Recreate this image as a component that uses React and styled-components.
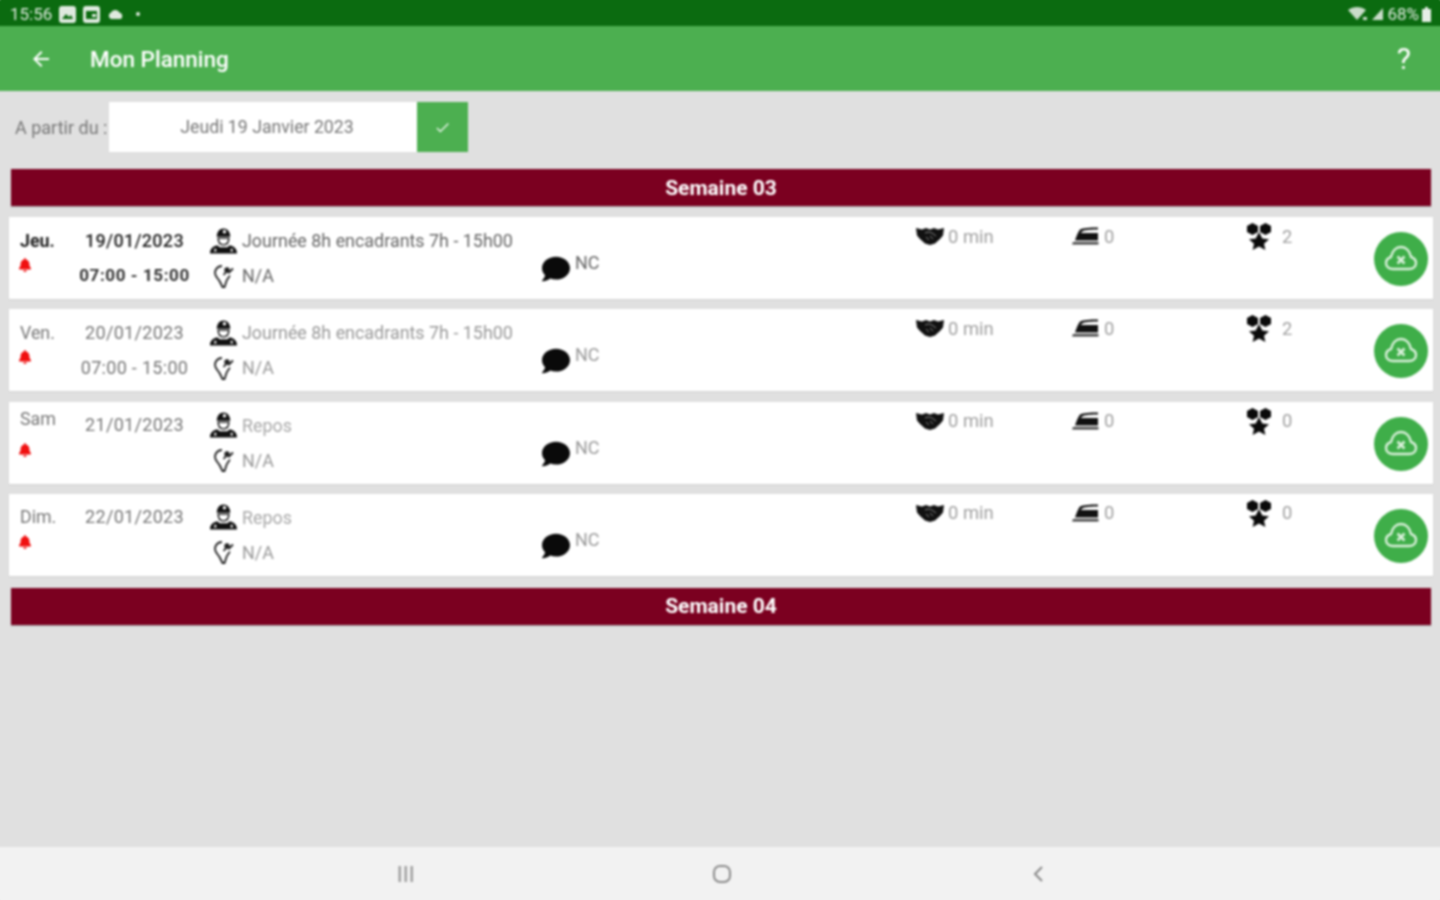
import styled, { createGlobalStyle } from "styled-components";
import { FaBell, FaComment } from "react-icons/fa";
import { MdArrowBack, MdCheck } from "react-icons/md";

const GlobalStyle = createGlobalStyle`
  html, body {
    margin: 0;
    padding: 0;
    overflow: hidden;
    background: #e0e0e0;
    font-family: Roboto, "Liberation Sans", sans-serif;
  }
`;

const Page = styled.div`
  width: 1440px;
  height: 900px;
  display: flex;
  flex-direction: column;
  filter: blur(0.8px);
`;

// the box-shadows bleed the bar colour past the window edge so the blur stays clean there
const StatusBar = styled.div`
  height: 26px;
  background: #0b6b10;
  box-shadow: -4px 0 0 #0b6b10, 4px 0 0 #0b6b10, 0 -4px 0 #0b6b10;
  display: flex;
  align-items: center;
  justify-content: space-between;
  padding: 2px 9px 0 10px;
  box-sizing: border-box;
  color: #dfeadf;
  font-size: 17px;
`;

const StatusGroup = styled.div`
  display: flex;
  align-items: center;
  gap: ${(p) => p.$gap || 7}px;
`;

const AppBar = styled.header`
  height: 65px;
  background: #4caf50;
  box-shadow: -4px 0 0 #4caf50, 4px 0 0 #4caf50;
  display: flex;
  align-items: center;
  color: #fff;
  padding: 0 29px;
  box-sizing: border-box;
`;

const Title = styled.h1`
  margin: 0 0 0 37px;
  flex: 1;
  font-size: 22.5px;
  font-weight: 500;
`;

const Help = styled.span`
  font-size: 30px;
  font-weight: 400;
`;

const Main = styled.main`
  flex: 1;
  padding: 11px 9px 0;
  display: flex;
  flex-direction: column;
`;

const DateRow = styled.div`
  display: flex;
  align-items: stretch;
  height: 50px;
  margin-bottom: 17px;
`;

const DateLabel = styled.label`
  width: 100px;
  box-sizing: border-box;
  padding-left: 6px;
  align-self: center;
  color: #777;
  font-size: 18px;
  white-space: nowrap;
`;

const DateValue = styled.div`
  width: 308px;
  background: #fff;
  display: flex;
  align-items: center;
  justify-content: center;
  color: #777;
  font-size: 17.7px;
  padding-left: 8px;
  box-sizing: border-box;
`;

const DateButton = styled.button`
  width: 51px;
  border: none;
  padding: 0;
  background: #4caf50;
  color: #e8f5e9;
  display: flex;
  align-items: center;
  justify-content: center;
`;

const WeekBanner = styled.div`
  height: 37px;
  margin: 0 1px 0 2px;
  width: 1420px;
  background: #7b0020;
  color: #fff;
  font-size: 21px;
  font-weight: 700;
  display: flex;
  align-items: center;
  justify-content: center;
  box-shadow: 0 1px 1px rgba(0, 0, 0, 0.25);
`;

const DayList = styled.div`
  display: flex;
  flex-direction: column;
  gap: 10.33px;
  margin: 11px 0 12px;
`;

const DayCard = styled.article`
  height: 82px;
  width: 1424px;
  box-sizing: border-box;
  background: #fff;
  padding-left: 11px;
  display: grid;
  grid-template-columns: 55px 120px 15px 332px 374px 156px 174px 128px 1fr;
  color: ${(p) => (p.$today ? "#666" : "#999")};
  box-shadow: 0 1px 1px rgba(0, 0, 0, 0.05);
`;

const DayColumn = styled.div`
  grid-column: 1;
  padding-top: 6px;
  display: flex;
  flex-direction: column;
`;

const DayName = styled.div`
  height: ${(p) => p.$height}px;
  margin-bottom: ${(p) => 35 - p.$height}px;
  line-height: ${(p) => p.$height}px;
  font-size: 17.8px;
  font-weight: ${(p) => (p.$today ? 700 : 400)};
  color: ${(p) => (p.$today ? "#222" : "#777")};
`;

const Bell = styled.span`
  height: 14px;
  color: #f01010;
  font-size: 14px;
  display: flex;
  align-items: center;
  margin-left: -2px;
`;

const TimeColumn = styled.div`
  grid-column: 2;
  padding-top: ${(p) => (p.$short ? 5 : 6)}px;
  display: flex;
  flex-direction: column;
  align-items: center;
  margin-left: -1px;
`;

const DateText = styled.div`
  height: 35px;
  line-height: 35px;
  font-size: 18px;
  font-weight: ${(p) => (p.$today ? 500 : 400)};
  color: ${(p) => (p.$today ? "#222" : "#777")};
  letter-spacing: 0.3px;
`;

const Hours = styled(DateText)`
  font-size: ${(p) => (p.$today ? 17 : 18)}px;
  font-weight: ${(p) => (p.$today ? 700 : 400)};
  color: ${(p) => (p.$today ? "#333" : "#777")};
  letter-spacing: ${(p) => (p.$today ? 0.6 : 0.3)}px;
`;

const JobColumn = styled.div`
  grid-column: 4;
  padding-top: 6px;
  display: flex;
  flex-direction: column;
`;

const JobLine = styled.div`
  height: 35px;
  display: flex;
  align-items: center;
  gap: 5px;
  font-size: 17.9px;
  color: ${(p) => (p.$muted ? "#a8a8a8" : "inherit")};
  white-space: nowrap;
`;

const JobLabel = styled.span`
  margin-top: ${(p) => (p.$muted ? 1 : 0)}px;
`;

const IconSlot = styled.span`
  width: 27px;
  display: flex;
  justify-content: center;
  color: #111;
`;

const NoteColumn = styled.div`
  grid-column: 5;
  padding-top: 38px;
  display: flex;
  align-items: flex-start;
  gap: 5px;
  font-size: 18px;
`;

const NoteText = styled.span`
  margin-top: -3px;
`;

const Stat = styled.div`
  grid-column: ${(p) => p.$column};
  padding-top: 9px;
  height: 20px;
  display: flex;
  align-items: center;
  gap: ${(p) => p.$gap}px;
  font-size: 18.4px;
  color: #a0a0a0;
`;

const SyncButton = styled.button`
  grid-column: 9;
  width: 54px;
  height: 54px;
  margin-top: 15px;
  border: none;
  border-radius: 50%;
  padding: 0;
  background: #3fae49;
  display: flex;
  align-items: center;
  justify-content: center;
`;

const NavBar = styled.nav`
  height: 53px;
  background: #f2f2f2;
  box-shadow: -4px 0 0 #f2f2f2, 4px 0 0 #f2f2f2, 0 4px 0 #f2f2f2;
  box-sizing: border-box;
  padding: 0 396px;
  display: flex;
  align-items: center;
  justify-content: space-between;
`;

const HomeSlot = styled.span`
  display: flex;
  margin-right: 4px;
`;

const Worker = () => (
  <svg width="28" height="28" viewBox="0 0 28 28" fill="#111">
    <path d="M7 9.5C7 4.5 10 1 14 1s7 3.5 7 8.5z" />
    <circle cx="15" cy="4.5" r="1.8" fill="#fff" />
    <path d="M8.5 11h11c0 4-2 7-5.5 7s-5.5-3-5.500-7z" fill="none" stroke="#111" strokeWidth="1.5" />
    <path d="M0 27c0-5 3-7.5 7.500-8.500l2.500 2h8l2.500-2c4.500 1 7.500 3.500 7.500 8.500z" />
    <rect x="4.5" y="22" width="2" height="3" fill="#fff" />
    <rect x="21.5" y="22" width="2" height="3" fill="#fff" />
  </svg>
);

const Bulb = () => (
  <svg width="22" height="26" viewBox="0 0 22 26" fill="none" stroke="#222" strokeWidth="1.8">
    <path d="M9 3C5 3 2 6 2 10c0 3.500 3 5.500 4.500 8l3 6h2l2-6c.8-2.200 2.500-3.500 3.300-5.500" />
    <path d="M10.5 12l3.500-4 2 1.500 4-4" />
    <circle cx="14" cy="7" r="1.8" fill="#222" />
  </svg>
);

// handshake seen as a dense dark shield with two pointed ears
const Handshake = () => (
  <svg width="28" height="18" viewBox="0 0 28 18" fill="#111">
    <path d="M0 1l6 1.500L10 1l4 1.500L18 1l4 1.500L28 1l-1 7.500-3 3.500-5 4.500-5 1.500-5-1.500L4 12 1 8.500z" />
    <path d="M9 6c3-1.500 5-1 7 0l4 3M10 10l3 3M14 9l3 3" fill="none" stroke="#888" strokeWidth="1" />
  </svg>
);

const Iron = () => (
  <svg width="28" height="20" viewBox="0 0 28 20" fill="#111">
    <path d="M8 3.500c3-1.500 10-2 18-2v2c-6 0-12 .2-15 1.500L8.500 7H26v7.500H3C4.500 10 6 6 8 3.500z" />
    <path d="M1 16h25.500v2.500H0z" fill="#444" />
  </svg>
);

const Team = () => (
  <svg width="26" height="28" viewBox="0 0 26 28" fill="#0a0a0a">
    <path d="M6.5 1L12 4v6l-5.500 3L1 10V4z" />
    <path d="M19.5 1L25 4v6l-5.500 3L14 10V4z" />
    <path d="M13 10l3.300 6.400 6.700.8-5 4.600 1.400 6.200-6.400-3.400-6.400 3.400 1.400-6.200-5-4.600 6.700-.8z" />
  </svg>
);

const CloudOff = () => (
  <svg width="34" height="30" viewBox="0 0 34 30" fill="none" stroke="#d9f0da" strokeWidth="2.4" strokeLinejoin="round">
    <path d="M9 25c-4 0-7-2.500-7-6 0-3 2-5 5-6C8 7 12 3 17 3s9 4 10 10c3 1 5 3 5 6 0 3.500-3 6-7 6z" />
    <path d="M13.5 12.500l7 7M20.500 12.500l-7 7" strokeWidth="2.6" />
  </svg>
);

const Wifi = () => (
  <svg width="20" height="15" viewBox="0 0 20 15" fill="#c9dcc9">
    <path d="M0 3c5-4 13-4 18 0l-9 10z" />
    <rect x="15" y="10" width="4" height="3" />
  </svg>
);

const Signal = () => (
  <svg width="13" height="14" viewBox="0 0 13 14" fill="#c9dcc9">
    <path d="M12 1v12H1z" />
  </svg>
);

const Battery = () => (
  <svg width="9" height="15" viewBox="0 0 9 15" fill="#e6efe6">
    <path d="M3 0h3v2h3v13H0V2h3z" />
  </svg>
);

const SmallGlyph = ({ children }) => (
  <svg width="17" height="17" viewBox="0 0 17 17">
    <rect width="17" height="17" rx="3" fill="#dfeadf" />
    {children}
  </svg>
);

const HomeCircle = () => (
  <svg width="20" height="20" viewBox="0 0 20 20" fill="none" stroke="#8a8a8a" strokeWidth="2">
    <rect x="2" y="2" width="16" height="16" rx="6" />
  </svg>
);

const Recents = () => (
  <svg width="20" height="18" viewBox="0 0 20 18" fill="#a0a0a0">
    <rect x="2.5" y="1" width="2.5" height="16" />
    <rect x="8.5" y="1" width="2.5" height="16" />
    <rect x="14.5" y="1" width="2.5" height="16" />
  </svg>
);

const Chevron = () => (
  <svg width="12" height="20" viewBox="0 0 12 20" fill="none" stroke="#888" strokeWidth="2">
    <path d="M10 3L3 10l7 7" />
  </svg>
);

const days = [
  { name: "Jeu.", date: "19/01/2023", hours: "07:00 - 15:00", job: "Journée 8h encadrants 7h - 15h00", team: 2, today: true, nameHeight: 35 },
  { name: "Ven.", date: "20/01/2023", hours: "07:00 - 15:00", job: "Journée 8h encadrants 7h - 15h00", team: 2, nameHeight: 35 },
  { name: "Sam", date: "21/01/2023", job: "Repos", team: 0, nameHeight: 21 },
  { name: "Dim.", date: "22/01/2023", job: "Repos", team: 0, nameHeight: 33 },
];

function DayRow({ day }) {
  const rest = day.job === "Repos";
  return (
    <DayCard $today={day.today}>
      <DayColumn>
        <DayName $today={day.today} $height={day.nameHeight}>{day.name}</DayName>
        <Bell><FaBell /></Bell>
      </DayColumn>
      <TimeColumn $short={!day.hours}>
        <DateText $today={day.today}>{day.date}</DateText>
        {day.hours && <Hours $today={day.today}>{day.hours}</Hours>}
      </TimeColumn>
      <JobColumn>
        <JobLine $muted={rest}>
          <IconSlot><Worker /></IconSlot>
          <JobLabel $muted={rest}>{day.job}</JobLabel>
        </JobLine>
        <JobLine>
          <IconSlot><Bulb /></IconSlot>
          N/A
        </JobLine>
      </JobColumn>
      <NoteColumn>
        <FaComment size={28} color="#0a0a0a" />
        <NoteText>NC</NoteText>
      </NoteColumn>
      <Stat $column={6} $gap={4}>
        <Handshake />
        0 min
      </Stat>
      <Stat $column={7} $gap={4}>
        <Iron />
        0
      </Stat>
      <Stat $column={8} $gap={10}>
        <Team />
        {day.team}
      </Stat>
      <SyncButton><CloudOff /></SyncButton>
    </DayCard>
  );
}

export default function App() {
  return (
    <Page>
      <GlobalStyle />
      <StatusBar>
        <StatusGroup>
          <span>15:56</span>
          <SmallGlyph><path d="M3 13l4-5 3 3 2-2 2 4z" fill="#0b6b10" /></SmallGlyph>
          <SmallGlyph><rect x="3" y="5" width="11" height="8" fill="#0b6b10" /><rect x="9" y="8" width="4" height="3" fill="#dfeadf" /></SmallGlyph>
          <svg width="17" height="11" viewBox="0 0 17 11" fill="#dfeadf"><path d="M4 10a3.500 3.500 0 0 1 0-6.500C5.500 0 11 0 12.500 3.500A3.500 3.500 0 0 1 13.500 10z" /></svg>
          <svg width="14" height="6" viewBox="0 0 14 6" fill="#dfeadf"><circle cx="7" cy="3" r="2" /></svg>
        </StatusGroup>
        <StatusGroup $gap={3}>
          <Wifi />
          <Signal />
          <span>68%</span>
          <Battery />
        </StatusGroup>
      </StatusBar>
      <AppBar>
        <MdArrowBack size={24} />
        <Title>Mon Planning</Title>
        <Help>?</Help>
      </AppBar>
      <Main>
        <DateRow>
          <DateLabel>A partir du :</DateLabel>
          <DateValue>Jeudi 19 Janvier 2023</DateValue>
          <DateButton><MdCheck size={17} /></DateButton>
        </DateRow>
        <WeekBanner>Semaine 03</WeekBanner>
        <DayList>
          {days.map((day) => (
            <DayRow key={day.date} day={day} />
          ))}
        </DayList>
        <WeekBanner>Semaine 04</WeekBanner>
      </Main>
      <NavBar>
        <Recents />
        <HomeSlot><HomeCircle /></HomeSlot>
        <Chevron />
      </NavBar>
    </Page>
  );
}
